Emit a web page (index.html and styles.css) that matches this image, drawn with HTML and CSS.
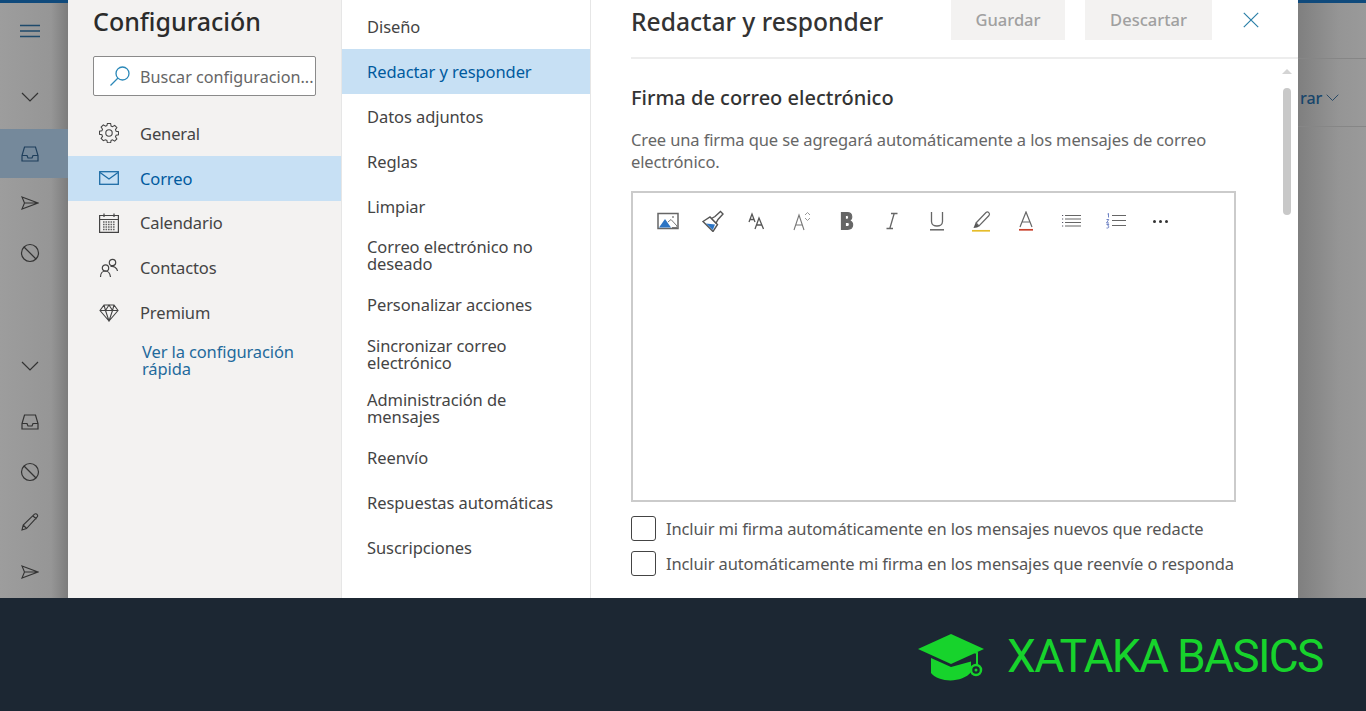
FILE: index.html
```html
<!DOCTYPE html>
<html lang="es">
<head>
    <meta charset="UTF-8">
    <meta name="viewport" content="width=device-width, initial-scale=1.0">
    <title>Configuración - Redactar y responder</title>
    <link rel="stylesheet" href="styles.css">
</head>
<body>
<div class="page">
    <div class="stage">
        <!-- dimmed mail rail -->
        <div class="rail">
            <div class="rail-item hamburger"><svg width="22" height="16" viewBox="0 0 22 16"><path d="M1 2.500h20M1 8h20M1 13.500h20" fill="none" stroke="#1f4a6b" stroke-width="1.300"/></svg></div>
            <div class="rail-item chevron-one"><svg width="18" height="10" viewBox="0 0 18 10"><path d="M1 1l8 8 8-8" fill="none" stroke="#333" stroke-width="1.200"/></svg></div>
            <div class="rail-item selected"><svg width="18" height="16" viewBox="0 0 18 16"><path d="M3.500 1h11L17 9.500V15H1V9.500zM1 9.500h5l1 2.500h4l1-2.500h5" fill="none" stroke="#1f3f5c" stroke-width="1.200"/></svg></div>
            <div class="rail-item"><svg width="18" height="14" viewBox="0 0 18 14"><path d="M1 1l16 6-16 6 2.500-6zM3.500 7H17" fill="none" stroke="#333" stroke-width="1.100"/></svg></div>
            <div class="rail-item"><svg width="20" height="20" viewBox="0 0 20 20"><circle cx="10" cy="10" r="8.500" fill="none" stroke="#333" stroke-width="1.200"/><path d="M4 4l12 12" stroke="#333" stroke-width="1.200"/></svg></div>
            <div class="rail-item chevron-two"><svg width="18" height="10" viewBox="0 0 18 10"><path d="M1 1l8 8 8-8" fill="none" stroke="#333" stroke-width="1.200"/></svg></div>
            <div class="rail-item inbox-two"><svg width="18" height="16" viewBox="0 0 18 16"><path d="M3.500 1h11L17 9.500V15H1V9.500zM1 9.500h5l1 2.500h4l1-2.500h5" fill="none" stroke="#333" stroke-width="1.200"/></svg></div>
            <div class="rail-item"><svg width="20" height="20" viewBox="0 0 20 20"><circle cx="10" cy="10" r="8.500" fill="none" stroke="#333" stroke-width="1.200"/><path d="M4 4l12 12" stroke="#333" stroke-width="1.200"/></svg></div>
            <div class="rail-item"><svg width="18" height="18" viewBox="0 0 18 18"><path d="M1 17l1.200-5L13.500 1.200c.8-.7 1.800-.6 2.500.2s.9 1.800.2 2.500L5.500 15.500zM2.200 12l3.300 3.500M12 3l3.500 3" fill="none" stroke="#333" stroke-width="1.100"/></svg></div>
            <div class="rail-item"><svg width="18" height="14" viewBox="0 0 18 14"><path d="M1 1l16 6-16 6 2.500-6zM3.500 7H17" fill="none" stroke="#333" stroke-width="1.100"/></svg></div>
        </div>

        <div class="modal">
            <div class="settings-nav">
                <div class="settings-title">Configuración</div>
                <div class="search-box">
                    <svg width="22" height="22" viewBox="0 0 22 22"><circle cx="13.500" cy="8.500" r="6.500" fill="none" stroke="#2b88b8" stroke-width="1.300"/><path d="M9 13l-7.500 7.500" stroke="#2b88b8" stroke-width="1.300"/></svg>
                    <span>Buscar configuracion...</span>
                </div>
                <div class="nav-row">
                    <svg width="20" height="20" viewBox="0 0 20 20"><path d="M8.300 0h3.400l.5 2.700 1.500.7 2.300-1.500 2.300 2.400-1.500 2.200.7 1.600 2.500.5v3.300l-2.500.5-.7 1.600 1.500 2.200-2.300 2.400-2.300-1.500-1.500.7-.5 2.500H8.300l-.5-2.500-1.500-.7L4 18.100l-2.300-2.400 1.500-2.200-.7-1.600L0 11.400V8.100l2.500-.5.700-1.600-1.500-2.200L4 1.400l2.300 1.500 1.500-.7z" transform="translate(.5 .5) scale(.95)" fill="none" stroke="#444" stroke-width="1.100"/><circle cx="10" cy="10" r="3.200" fill="none" stroke="#444" stroke-width="1.100"/></svg>
                    <span>General</span>
                </div>
                <div class="nav-row active">
                    <svg width="20" height="14" viewBox="0 0 20 14"><rect x=".7" y=".7" width="18.600" height="12.600" fill="none" stroke="#1d6ca5" stroke-width="1.300"/><path d="M1 1.500l9 6.500 9-6.500" fill="none" stroke="#1d6ca5" stroke-width="1.300"/></svg>
                    <span>Correo</span>
                </div>
                <div class="nav-row">
                    <svg width="20" height="20" viewBox="0 0 20 20"><path d="M.6 2.500h18.800v16.900H.6zM.6 6.500h18.800M5 .5v3.500M15 .5v3.500" fill="none" stroke="#444" stroke-width="1.200"/><path d="M4 9h12M4 11.500h12M4 14h12M4 16.500h12" stroke="#666" stroke-width="1.400" stroke-dasharray="1.600 .9"/></svg>
                    <span>Calendario</span>
                </div>
                <div class="nav-row">
                    <svg width="20" height="20" viewBox="0 0 20 20"><circle cx="6.500" cy="10" r="3.200" fill="none" stroke="#444" stroke-width="1.200"/><circle cx="13.500" cy="4.500" r="3.200" fill="none" stroke="#444" stroke-width="1.200"/><path d="M1.500 19c0-3.500 2-6 5-6s4.500 2.500 5 6M11.500 8.500c3-.6 6.500.9 7 4.500" fill="none" stroke="#444" stroke-width="1.200"/></svg>
                    <span>Contactos</span>
                </div>
                <div class="nav-row">
                    <svg width="20" height="18" viewBox="0 0 20 18"><path d="M5 1h10l4 5.500L10 17 1 6.500zM1 6.500h18M6.500 6.500L10 17l3.500-10.500M5 1l1.500 5.500L10 1l3.500 5.500L15 1" fill="none" stroke="#444" stroke-width="1.100"/></svg>
                    <span>Premium</span>
                </div>
                <a class="quick-link">Ver la configuración rápida</a>
            </div>

            <div class="settings-sub">
                <div class="sub-row">Diseño</div>
                <div class="sub-row active">Redactar y responder</div>
                <div class="sub-row">Datos adjuntos</div>
                <div class="sub-row">Reglas</div>
                <div class="sub-row">Limpiar</div>
                <div class="sub-row two-line">Correo electrónico no deseado</div>
                <div class="sub-row">Personalizar acciones</div>
                <div class="sub-row two-line">Sincronizar correo electrónico</div>
                <div class="sub-row two-line">Administración de mensajes</div>
                <div class="sub-row">Reenvío</div>
                <div class="sub-row">Respuestas automáticas</div>
                <div class="sub-row">Suscripciones</div>
            </div>

            <div class="pane">
                <div class="pane-head">
                    <div class="pane-title">Redactar y responder</div>
                    <div class="btn save">Guardar</div>
                    <div class="btn discard">Descartar</div>
                    <svg class="close" width="16" height="16" viewBox="0 0 16 16"><path d="M.8.800l14.400 14.400M15.200.800L.8 15.200" stroke="#2b7fa8" stroke-width="1.200"/></svg>
                </div>
                <div class="pane-body">
                    <div class="pane-content">
                        <h2>Firma de correo electrónico</h2>
                        <p class="hint">Cree una firma que se agregará automáticamente a los mensajes de correo electrónico.</p>
                        <div class="editor">
                            <div class="toolbar">
                                <span class="tool"><svg width="22" height="18" viewBox="0 0 22 18"><rect x="1" y="1.500" width="20" height="15" fill="#fff" stroke="#666" stroke-width="1.500"/><path d="M2 15.500L8 7l6 8.500z" fill="#2b74c4"/><path d="M11 10l3-2.500 6 6.500v1.500h-5" fill="#fff" stroke="#777"/><circle cx="16" cy="5" r="1" fill="#888"/></svg></span>
                                <span class="tool"><svg width="22" height="22" viewBox="0 0 22 22"><path d="M1 11.500L8 7l7.500 7.500L11 21.500z" fill="#fff" stroke="#555" stroke-width="1.400"/><path d="M4 13.500l9 1-2.200 5.500z" fill="#2b74c4"/><path d="M9.500 8.500l3.500-2 5.500-5 2.500 2.500-5 5.500-2 3.500z" fill="#fff" stroke="#555" stroke-width="1.400"/></svg></span>
                                <span class="tool"><svg width="18" height="18" viewBox="0 0 18 18"><path d="M1 10L4 2l3 8M2 7.500h4M7 17l4-11 4.500 11M8.500 13h5.500" fill="none" stroke="#555" stroke-width="1.300"/></svg></span>
                                <span class="tool"><svg width="18" height="20" viewBox="0 0 18 20"><path d="M1 19L6 4l5 15M2.800 14h6.400" fill="none" stroke="#777" stroke-width="1.100"/><path d="M12 4l2.500-2.500L17 4M12 7l2.500 2.500L17 7" fill="none" stroke="#999"/></svg></span>
                                <span class="tool"><svg width="16" height="20" viewBox="0 0 14 18"><path d="M2 1.500h5.300c5 0 5.200 6.300 1.200 7 5 .3 5 8-1 8H2zM5.500 4v3.500h1.500c2 0 2-3.500 0-3.500zM5.500 10.200V14H7.500c2.200 0 2.200-3.800 0-3.800z" fill="#666" stroke="#666" fill-rule="evenodd"/></svg></span>
                                <span class="tool"><svg width="12" height="18" viewBox="0 0 12 18"><path d="M5 1.500h6.500M.5 16.500H7M8.200 1.500L3.800 16.500" fill="none" stroke="#666" stroke-width="1.300"/></svg></span>
                                <span class="tool"><svg width="16" height="20" viewBox="0 0 16 20"><path d="M2.500 1v9.500c0 6 11 6 11 0V1" fill="none" stroke="#666" stroke-width="1.300"/><path d="M1 18.800h14" stroke="#666" stroke-width="1.500"/></svg></span>
                                <span class="tool"><svg width="20" height="22" viewBox="0 0 20 22"><path d="M5 13L15 2.500c2-1.500 4.500.8 3 3L8 16z" fill="#fff" stroke="#666" stroke-width="1.200"/><path d="M4.500 13l3.500 3.500-2 1-3.500.5z" fill="#555"/><path d="M1 20.800h18" stroke="#e6bd2b" stroke-width="1.700"/></svg></span>
                                <span class="tool"><svg width="16" height="20" viewBox="0 0 16 20"><path d="M2 16L8 1l6 15M3.800 11h8.400" fill="none" stroke="#666" stroke-width="1.200"/><path d="M1 18.800h14" stroke="#c9402a" stroke-width="1.700"/></svg></span>
                                <span class="tool"><svg width="20" height="14" viewBox="0 0 20 14"><path d="M4 1.500h16M4 5h16M4 8.500h16M4 12h16" stroke="#666" stroke-width="1.100"/><path d="M1 1.500h1.200M1 5h1.200M1 8.500h1.200M1 12h1.200" stroke="#556" stroke-width="1.100"/></svg></span>
                                <span class="tool"><svg width="22" height="16" viewBox="0 0 22 16"><path d="M7 2.500h14M7 7.500h14M7 12.500h14" stroke="#666" stroke-width="1.200"/><path d="M2.500 1l1-.5v4M1.500 6.500h2.200L1.500 10h2.500M1.500 11.500h2.300l-1 1.500c1.500 0 1.500 2.500-1.300 2" fill="none" stroke="#4a63b5" stroke-width=".8"/></svg></span>
                                <span class="tool dots"><i></i><i></i><i></i></span>
                            </div>
                        </div>
                        <label class="check"><span class="box"></span>Incluir mi firma automáticamente en los mensajes nuevos que redacte</label>
                        <label class="check"><span class="box"></span>Incluir automáticamente mi firma en los mensajes que reenvíe o responda</label>
                    </div>
                    <div class="scroll">
                        <div class="scroll-up"></div>
                        <div class="scroll-thumb"></div>
                    </div>
                </div>
            </div>
        </div>

        <!-- dimmed reading pane behind the dialog -->
        <div class="backdrop">
            <div class="backdrop-bar"></div>
            <div class="backdrop-filter">
                <span>rar</span>
                <svg width="13" height="8" viewBox="0 0 13 8"><path d="M.7.700l5.800 5.800L12.300.7" fill="none" stroke="#2a4a66"/></svg>
            </div>
        </div>
    </div>

    <div class="footer">
        <svg width="68" height="48" viewBox="0 0 68 48"><path d="M34 0l33 15-33 15L1 15z" fill="#17d32c"/><path d="M14 24l20 9 20-5.500V38c-8 11-32 11-40 1z" fill="#17d32c"/><path d="M49 15l11 4v12" fill="none" stroke="#17d32c" stroke-width="2"/><circle cx="59" cy="36" r="5" fill="none" stroke="#17d32c" stroke-width="2.500"/><circle cx="59" cy="36" r="1.500" fill="#17d32c"/></svg>
        <span class="brand">XATAKA BASICS</span>
    </div>
</div>
</body>
</html>
```

FILE: styles.css
```css
body {
    font-family: "Noto Sans", "Open Sans", sans-serif;
    margin: 0;
    padding: 0;
    background-color: #1c2733;
    color: #444;
}

.page {
    width: 1366px;
    height: 711px;
    display: flex;
    flex-direction: column;
    overflow: hidden;
}

.stage {
    height: 598px;
    display: flex;
}

/* left rail */
.rail {
    width: 68px;
    border-top: 3px solid #0f4a7c;
    box-sizing: border-box;
    background: linear-gradient(to right, #9d9d9d 0, #969696 75%, #7c7c7c 100%);
    display: flex;
    flex-direction: column;
}

.rail-item {
    height: 50px;
    flex: none;
    display: flex;
    align-items: center;
    justify-content: center;
    padding-right: 8px;
    box-sizing: border-box;
}

.hamburger { margin-top: 3px; }
.chevron-one { margin-top: 16px; }
.chevron-two { margin-top: 63px; }
.inbox-two { margin-top: 6px; }

.rail-item.selected {
    height: 49px;
    margin-top: 7px;
    background-color: #75899b;
}

/* dialog */
.modal {
    width: 1230px;
    display: flex;
    background-color: #fff;
}

.settings-nav {
    width: 273px;
    flex: none;
    background-color: #f3f2f1;
    border-right: 1px solid #e6e6e6;
}

.settings-title {
    font-size: 25px;
    font-weight: 500;
    color: #2b2b2b;
    line-height: 42px;
    padding: 0 0 2px 25px;
}

.search-box {
    width: 223px;
    height: 40px;
    margin: 12px 0 15px 25px;
    box-sizing: border-box;
    background-color: #fff;
    border: 1px solid #8a8a8a;
    border-radius: 2px;
    display: flex;
    align-items: center;
    padding-left: 15px;
    gap: 9px;
    font-size: 16.200px;
    color: #666;
    white-space: nowrap;
}

.search-box span {
    padding-top: 2px;
}

.nav-row {
    height: 44.800px;
    display: flex;
    align-items: center;
    font-size: 16.500px;
    letter-spacing: -.12px;
    color: #444;
    box-sizing: border-box;
}

.nav-row svg {
    margin: 0 21px 0 31px;
    flex: none;
}

.nav-row.active {
    background-color: #c7e0f4;
    color: #005a9e;
}

.quick-link {
    display: block;
    margin: 8px 40px 0 74px;
    font-size: 16.500px;
    letter-spacing: -.12px;
    line-height: 17px;
    color: #1f6a9c;
}

.settings-sub {
    width: 249px;
    flex: none;
    padding-top: 4px;
    box-sizing: border-box;
    border-right: 1px solid #e6e6e6;
}

.sub-row {
    min-height: 44.900px;
    padding: 0 30px 0 25px;
    display: flex;
    align-items: center;
    font-size: 16.500px;
    letter-spacing: -.08px;
    line-height: 17px;
    color: #444;
    box-sizing: border-box;
}

.sub-row.two-line {
    min-height: 54px;
    padding-right: 40px;
}

.sub-row.active {
    background-color: #c7e0f4;
    color: #005a9e;
}

/* right pane */
.pane {
    flex: 1;
    display: flex;
    flex-direction: column;
    min-width: 0;
}

.pane-head {
    height: 59px;
    box-sizing: border-box;
    border-bottom: 2px solid #ededed;
    margin-left: 40px;
    display: flex;
    align-items: flex-start;
}

.pane-title {
    width: 320px;
    font-size: 24.600px;
    font-weight: 500;
    color: #333;
    line-height: 44px;
}

.btn {
    height: 40px;
    line-height: 40px;
    background-color: #f3f2f1;
    color: #a0a0a0;
    font-size: 16.500px;
    font-weight: 500;
    text-align: center;
}

.save { width: 114px; }
.discard { width: 127px; margin-left: 20px; }
.close { margin: 12px 0 0 31px; }

.pane-body {
    flex: 1;
    display: flex;
    min-height: 0;
}

.pane-content {
    width: 605px;
    margin-left: 40px;
}

.pane-content h2 {
    margin: 25px 0 0;
    font-size: 20px;
    line-height: 28px;
    font-weight: 500;
    color: #333;
}

.hint {
    margin: 17px 0 0;
    font-size: 16.500px;
    letter-spacing: -.12px;
    line-height: 22px;
    color: #666;
}

.editor {
    height: 311px;
    margin-top: 18px;
    box-sizing: border-box;
    border: 2px solid #cbcbcb;
}

.toolbar {
    display: flex;
    padding: 12px 0 0 12.500px;
    height: 44px;
    box-sizing: border-box;
    align-items: center;
}

.tool {
    width: 44.800px;
    flex: none;
    display: flex;
    justify-content: center;
    align-items: center;
}

.dots {
    gap: 3px;
}

.dots i {
    width: 3px;
    height: 3px;
    border-radius: 50%;
    background-color: #333;
}

.check {
    display: flex;
    align-items: center;
    height: 25px;
    margin-top: 9.500px;
    font-size: 16.500px;
    letter-spacing: -.12px;
    color: #555;
    white-space: nowrap;
}

.editor + .check {
    margin-top: 14px;
}

.box {
    width: 25px;
    height: 25px;
    flex: none;
    margin-right: 10px;
    box-sizing: border-box;
    border: 1.500px solid #444;
    border-radius: 3px;
}

.scroll {
    width: 8px;
    margin-left: 47px;
}

.scroll-up {
    width: 0;
    margin: 10px 0 0 -1px;
    border: 5px solid transparent;
    border-top: 0;
    border-bottom: 5px solid #d4d4d4;
}

.scroll-thumb {
    height: 127px;
    margin-top: 14px;
    background-color: #c8c8c8;
    border-radius: 4px;
}

/* right gray area */
.backdrop {
    flex: 1;
    background: linear-gradient(to right, #7f7f7f 0, #959595 60%, #9a9a9a 100%);
    border-top: 3px solid #0f4a7c;
    box-sizing: border-box;
}

.backdrop-bar {
    height: 55px;
    border-bottom: 1px solid #868686;
}

.backdrop-filter {
    height: 68px;
    border-bottom: 1px solid #868686;
    display: flex;
    align-items: center;
    gap: 4px;
    padding: 10px 0 0 2px;
    font-size: 16px;
    font-weight: 500;
    color: #17456b;
    box-sizing: border-box;
}

.footer {
    flex: 1;
    background-color: #1c2733;
    display: flex;
    align-items: center;
    padding: 6px 0 0 917px;
    gap: 22px;
}

.brand {
    font-family: Roboto, "Liberation Sans", sans-serif;
    font-size: 46px;
    font-weight: 400;
    letter-spacing: -1.700px;
    margin-bottom: 4px;
    color: #17d32c;
    white-space: nowrap;
}
```
